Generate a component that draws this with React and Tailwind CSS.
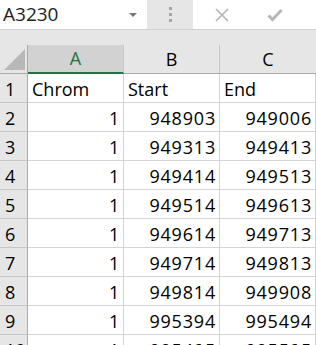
import React from 'react';

const ROWS = [
    ['Chrom', 'Start', 'End'],
    [1, 948903, 949006],
    [1, 949313, 949413],
    [1, 949414, 949513],
    [1, 949514, 949613],
    [1, 949614, 949713],
    [1, 949714, 949813],
    [1, 949814, 949908],
    [1, 995394, 995494],
    [1, 995495, 995595],
];

const Cell = ({ value }) => {
    const isNum = typeof value === 'number';
    return (
        <div
            className={`h-[29px] border-r border-b border-[#d4d4d4] bg-white flex items-end pb-[4px] overflow-hidden ${
                isNum ? 'justify-end pr-[3px] tracking-[0.8px]' : 'justify-start pl-[4px]'
            }`}
        >
            <span className="leading-none">{value}</span>
        </div>
    );
};

const App = () => {
    return (
        <div
            className="w-[316px] h-[345px] overflow-hidden bg-[#e6e6e6] text-[#000000] text-[18px]"
            style={{ fontFamily: '"Open Sans", sans-serif' }}
        >
            {/* name box + formula bar */}
            <div className="flex h-[30px] border-b border-[#d0d0d0]">
                <div className="w-[147px] bg-white flex items-center justify-between pl-[3px] pr-[10px]">
                    <span className="text-[19px] text-[#222] leading-none">A3230</span>
                    <span className="w-0 h-0 border-l-[4px] border-r-[4px] border-t-[4px] border-l-transparent border-r-transparent border-t-[#777]" />
                </div>
                <div className="w-[46px] flex flex-col items-center justify-center gap-[3px]">
                    <span className="w-[3px] h-[3px] bg-[#a6a6a6]" />
                    <span className="w-[3px] h-[3px] bg-[#a6a6a6]" />
                    <span className="w-[3px] h-[3px] bg-[#a6a6a6]" />
                </div>
                <div className="flex-1 bg-white flex items-center pl-[22px] gap-[38px]">
                    <svg width="14" height="14" viewBox="0 0 14 14">
                        <path d="M1 1 L13 13 M13 1 L1 13" stroke="#b3b3b3" strokeWidth="1.6" fill="none" />
                    </svg>
                    <svg width="16" height="14" viewBox="0 0 16 14">
                        <path d="M1.5 7.5 L5.5 11.5 L14.5 2" stroke="#b8b8b8" strokeWidth="3" fill="none" />
                    </svg>
                </div>
            </div>

            <div className="h-[15px]" />

            {/* sheet */}
            <div className="grid grid-cols-[28px_96px_96px_96px]">
                <div className="h-[29px] border-r border-b border-[#ababab] bg-[#e6e6e6] relative">
                    <div
                        className="absolute left-[4px] top-[4px] w-[21px] h-[21px] bg-[#b8b8b8]"
                        style={{ clipPath: 'polygon(100% 0, 100% 100%, 0 100%)' }}
                    />
                </div>
                <div className="h-[29px] bg-[#d2d2d2] border-r border-[#c6c6c6] border-b-2 border-b-[#217346] flex items-center justify-center text-[#217346]">
                    A
                </div>
                <div className="h-[29px] bg-[#e6e6e6] border-r border-b border-r-[#c6c6c6] border-b-[#ababab] flex items-center justify-center">
                    B
                </div>
                <div className="h-[29px] bg-[#e6e6e6] border-b border-[#ababab] flex items-center justify-center">
                    C
                </div>

                {ROWS.map((row, i) => (
                    <React.Fragment key={i}>
                        <div className="h-[29px] bg-[#e6e6e6] border-r border-b border-r-[#ababab] border-b-[#c6c6c6] flex items-end pb-[4px] pl-[5px]">
                            <span className="leading-none">{i + 1}</span>
                        </div>
                        {row.map((v, j) => (
                            <Cell key={j} value={v} />
                        ))}
                    </React.Fragment>
                ))}
            </div>
        </div>
    );
};

export default App;
